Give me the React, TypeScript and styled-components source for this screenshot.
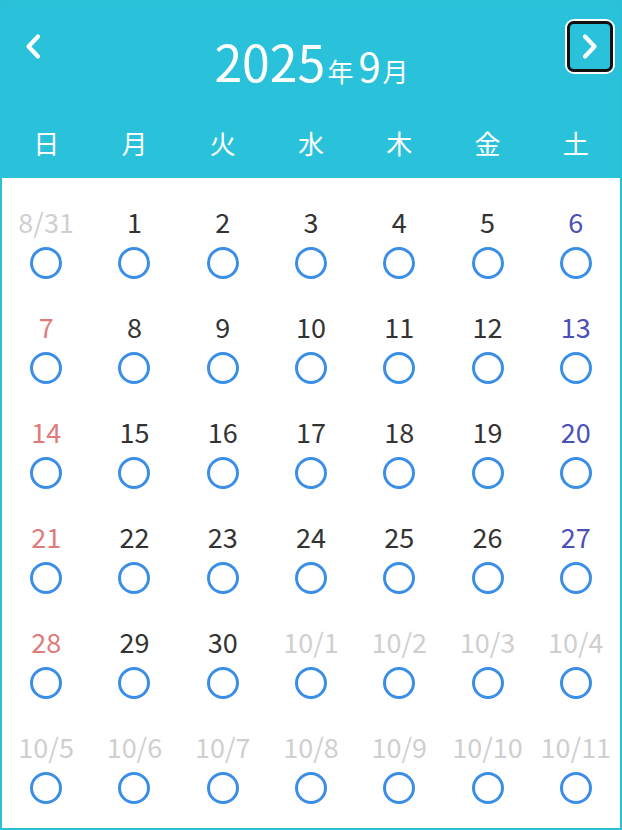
import React from 'react';
import styled, { createGlobalStyle } from 'styled-components';

const GlobalStyle = createGlobalStyle`
  html, body {
    margin: 0;
    padding: 0;
    background: #ffffff;
  }
  body {
    font-family: "Noto Sans CJK JP", "Noto Sans", sans-serif;
  }
`;

type Tone = 'normal' | 'sun' | 'sat' | 'other';

const toneColor: Record<Tone, string> = {
  normal: '#333333',
  sun: '#e07b7b',
  sat: '#4b50b8',
  other: '#cfcfcf',
};

// 2025年9月 のカレンダー (8/31 から 10/11 まで)
const buildDays = () => {
  const days: { label: string; tone: Tone }[] = [];
  days.push({ label: '8/31', tone: 'other' });
  for (let d = 1; d <= 30; d++) {
    const col = days.length % 7;
    days.push({ label: String(d), tone: col === 0 ? 'sun' : col === 6 ? 'sat' : 'normal' });
  }
  let n = 1;
  while (days.length < 42) {
    days.push({ label: `10/${n}`, tone: 'other' });
    n++;
  }
  return days;
};

const weekdays = ['日', '月', '火', '水', '木', '金', '土'];

const Chevron: React.FC<{ dir: 'left' | 'right' }> = ({ dir }) => (
  <svg width="18" height="27" viewBox="0 0 18 27" fill="none">
    <path
      d={dir === 'left' ? 'M14 3.5 L4.5 13.5 L14 23.5' : 'M4 3.5 L13.5 13.5 L4 23.5'}
      stroke="#ffffff"
      strokeWidth="4.2"
      strokeLinecap="round"
      strokeLinejoin="round"
    />
  </svg>
);

const App: React.FC = () => {
  const days = buildDays();

  return (
    <>
      <GlobalStyle />
      <Calendar>
        <Header>
          <TopRow>
            <NavButton aria-label="前の月">
              <Chevron dir="left" />
            </NavButton>
            <Title>
              <Big>2025</Big>
              <Unit>年</Unit>
              <Month>9</Month>
              <Unit>月</Unit>
            </Title>
            <NavButton aria-label="次の月" $focused>
              <Chevron dir="right" />
            </NavButton>
          </TopRow>
          <WeekRow>
            {weekdays.map((w) => (
              <WeekLabel key={w}>{w}</WeekLabel>
            ))}
          </WeekRow>
        </Header>
        <Grid>
          {days.map((day, i) => (
            <Cell key={i}>
              <DayNum $tone={day.tone}>{day.label}</DayNum>
              <Mark />
            </Cell>
          ))}
        </Grid>
      </Calendar>
    </>
  );
};

const Calendar = styled.div`
  width: 622px;
  height: 830px;
  box-sizing: border-box;
  border: 2px solid #2ac0d8;
  background: #ffffff;
  display: flex;
  flex-direction: column;
`;

const Header = styled.div`
  background: #29c2da;
  height: 176px;
  box-sizing: border-box;
  color: #ffffff;
`;

const TopRow = styled.div`
  display: grid;
  grid-template-columns: 46px 1fr 46px;
  align-items: start;
  padding: 19px 7px 0 8px;
`;

const NavButton = styled.button<{ $focused?: boolean }>`
  width: 46px;
  height: 51px;
  padding: 0;
  margin: 0;
  display: flex;
  align-items: center;
  justify-content: center;
  background: transparent;
  cursor: pointer;
  border-radius: 7px;
  box-sizing: border-box;
  border: 3px solid ${(p) => (p.$focused ? '#111111' : 'transparent')};
  box-shadow: ${(p) => (p.$focused ? '0 0 0 2px #ffffff' : 'none')};
`;

const Title = styled.div`
  margin-top: 14px;
  text-align: center;
  line-height: 1;
  white-space: nowrap;
  font-size: 50px;
`;

const Big = styled.span`
  font-size: 50px;
`;

const Unit = styled.span`
  font-size: 26px;
  margin-left: 2px;
`;

const Month = styled.span`
  font-size: 40px;
  margin-left: 5px;
`;

const WeekRow = styled.div`
  display: grid;
  grid-template-columns: repeat(7, 1fr);
  margin-top: 41px;
`;

const WeekLabel = styled.div`
  text-align: center;
  font-size: 26px;
  line-height: 34px;
`;

const Grid = styled.div`
  display: grid;
  grid-template-columns: repeat(7, 1fr);
  grid-auto-rows: 105px;
`;

const Cell = styled.div`
  display: flex;
  flex-direction: column;
  align-items: center;
  padding-top: 27px;
  box-sizing: border-box;
`;

const DayNum = styled.div<{ $tone: Tone }>`
  font-size: 27px;
  line-height: 34px;
  color: ${(p) => toneColor[p.$tone]};
  white-space: nowrap;
`;

const Mark = styled.div`
  margin-top: 8px;
  width: 32px;
  height: 32px;
  box-sizing: border-box;
  border: 3px solid #3b8ee6;
  border-radius: 50%;
`;

export default App;
